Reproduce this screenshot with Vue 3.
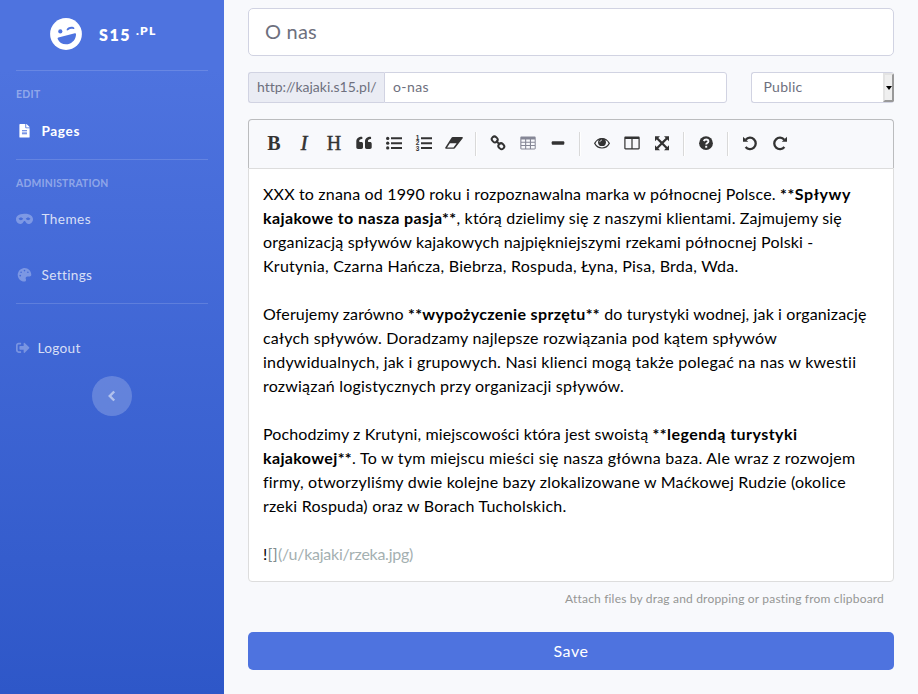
<script setup>
// Spreads a run of text over a given width by adjusting its letter spacing.
const vFit = {
  mounted(el, { value }) {
    const natural = el.getBoundingClientRect().width
    const count = el.textContent.length
    el.style.letterSpacing = `${(value - natural) / count}px`
  },
}

// Each line is a list of runs: [text, width, kind]
const lines = [
  [['XXX to znana od 1990 roku i rozpoznawalna marka w północnej Polsce. ', 517], ['**Spływy', 71, 'bold']],
  [['kajakowe to nasza pasja**', 193.5, 'bold'], [', którą dzielimy się z naszymi klientami. Zajmujemy się', 385.5]],
  [['organizacją spływów kajakowych najpiękniejszymi rzekami północnej Polski -', 550.5]],
  [['Krutynia, Czarna Hańcza, Biebrza, Rospuda, Łyna, Pisa, Brda, Wda.', 475.5]],
  [],
  [['Oferujemy zarówno ', 145], ['**wypożyczenie sprzętu**', 192, 'bold'], [' do turystyki wodnej, jak i organizację', 266.5]],
  [['całych spływów. Doradzamy najlepsze rozwiązania pod kątem spływów', 514]],
  [['indywidualnych, jak i grupowych. Nasi klienci mogą także polegać na nas w kwestii', 593.5]],
  [['rozwiązań logistycznych przy organizacji spływów.', 361]],
  [],
  [['Pochodzimy z Krutyni, miejscowości która jest swoistą ', 389.5], ['**legendą turystyki', 145, 'bold']],
  [['kajakowej**', 89, 'bold'], ['. To w tym miejscu mieści się nasza główna baza. Ale wraz z rozwojem', 503.5]],
  [['firmy, otworzyliśmy dwie kolejne bazy zlokalizowane w Maćkowej Rudzie (okolice', 582.5]],
  [['rzeki Rospuda) oraz w Borach Tucholskich.', 303.5]],
  [],
  [['!', 4.5], ['[]', 10.5, 'bracket'], ['(/u/kajaki/rzeka.jpg)', 135, 'url']],
]
</script>

<template>
  <div class="page">
    <aside class="sidebar">
      <div class="brand">
        <svg class="logo" viewBox="0 0 32 32">
          <circle cx="16" cy="16" r="15.900" fill="#fff" />
          <g fill="#4e73df">
            <circle cx="10.300" cy="13.400" r="2.100" />
            <path d="M8.400 19.600 24.900 15.200c.6-.1 1.100.2 1.100.9.200 5-3.400 9.300-8.200 10.100-4.600.7-8.500-1.300-10.100-5.300-.2-.6.100-1.100.7-1.300Z" />
            <path d="M16.600 11.800c.4-2.700 5.800-4.100 7.600-2 .6.800-.2 1.500-1 1.200-1.800-.6-3.400-.2-4.800 1-.7.7-2 .7-1.800-.2Z" />
          </g>
        </svg>
        <div class="brand-text"><span v-fit="32">S15</span><sup v-fit="20.500">.PL</sup></div>
      </div>
      <div class="rule"></div>
      <div class="heading edit"><span v-fit="24.500">EDIT</span></div>
      <div class="link active pages">
        <svg class="fw" viewBox="-120 0 624 512"><path d="M224 136V0H24C10.700 0 0 10.700 0 24v464c0 13.300 10.700 24 24 24h336c13.300 0 24-10.700 24-24V160H248c-13.200 0-24-10.800-24-24zm64 236c0 6.600-5.400 12-12 12H108c-6.600 0-12-5.400-12-12v-8c0-6.600 5.400-12 12-12h168c6.600 0 12 5.400 12 12v8zm0-64c0 6.600-5.400 12-12 12H108c-6.600 0-12-5.400-12-12v-8c0-6.600 5.400-12 12-12h168c6.600 0 12 5.400 12 12v8zm0-72v8c0 6.600-5.400 12-12 12H108c-6.600 0-12-5.400-12-12v-8c0-6.600 5.400-12 12-12h168c6.600 0 12 5.400 12 12zm96-114.100v6.100H256V0h6.100c6.400 0 12.500 2.500 17 7l97.900 98c4.500 4.500 7 10.600 7 16.900z" /></svg>
        <span v-fit="38.500">Pages</span>
      </div>
      <div class="rule"></div>
      <div class="heading admin"><span v-fit="92.500">ADMINISTRATION</span></div>
      <div class="link themes">
        <svg class="fw" viewBox="0 0 640 512"><path d="M320.670 64c-442.600 0-357.570 384-158.460 384 39.900 0 77.470-20.690 101.420-55.860l25.730-37.790c15.660-22.990 46.970-22.990 62.630 0l25.730 37.790C401.660 427.310 439.230 448 479.130 448c189.860 0 290.630-384-158.460-384zM184 308.360c-41.060 0-67.760-25.660-80.080-41.050-5.230-6.530-5.230-16.090 0-22.630 12.320-15.400 39.010-41.050 80.080-41.050s67.760 25.660 80.080 41.050c5.230 6.530 5.230 16.090 0 22.630-12.320 15.400-39.020 41.050-80.080 41.050zm272 0c-41.060 0-67.760-25.660-80.080-41.050-5.230-6.530-5.230-16.090 0-22.630 12.320-15.400 39.010-41.050 80.080-41.050s67.760 25.660 80.080 41.050c5.230 6.530 5.230 16.090 0 22.630-12.320 15.400-39.020 41.050-80.080 41.050z" /></svg>
        <span v-fit="49.500">Themes</span>
      </div>
      <div class="link settings">
        <svg class="fw" viewBox="-64 0 640 512"><path d="M204.300 5C104.900 24.400 24.800 104.300 5.200 203.400c-37 187 131.700 326.400 258.800 306.700 41.200-6.400 61.400-54.600 42.500-91.700-23.100-45.400 9.900-98.400 60.900-98.400h79.700c35.800 0 64.800-29.600 64.900-65.300C511.500 97.100 368.100-26.900 204.300 5zM96 320c-17.700 0-32-14.300-32-32s14.300-32 32-32 32 14.300 32 32-14.300 32-32 32zm32-128c-17.700 0-32-14.300-32-32s14.300-32 32-32 32 14.300 32 32-14.300 32-32 32zm128-64c-17.700 0-32-14.300-32-32s14.300-32 32-32 32 14.300 32 32-14.300 32-32 32zm128 64c-17.700 0-32-14.300-32-32s14.300-32 32-32 32 14.300 32 32-14.300 32-32 32z" /></svg>
        <span v-fit="50.500">Settings</span>
      </div>
      <div class="rule"></div>
      <div class="link logout">
        <svg class="exit" viewBox="0 0 512 512"><path d="M497 273L329 441c-15 15-41 4.500-41-17v-96H152c-13.300 0-24-10.700-24-24v-96c0-13.300 10.700-24 24-24h136V88c0-21.400 25.900-32 41-17l168 168c9.300 9.400 9.300 24.600 0 34zM192 436v-40c0-6.600-5.400-12-12-12H96c-17.700 0-32-14.300-32-32V160c0-17.700 14.300-32 32-32h84c6.600 0 12-5.400 12-12V76c0-6.600-5.400-12-12-12H96c-53 0-96 43-96 96v192c0 53 43 96 96 96h84c6.600 0 12-5.400 12-12z" /></svg>
        <span v-fit="43">Logout</span>
      </div>
      <button class="collapse">
        <svg width="10" height="12" viewBox="0 0 10 12"><path d="M7.200 1.500 2.800 6l4.400 4.500" fill="none" stroke="currentColor" stroke-width="2.500" /></svg>
      </button>
    </aside>

    <main class="content">
      <div class="title-field"><span v-fit="52">O nas</span></div>
      <div class="row">
        <div class="slug">
          <div class="prefix"><span v-fit="119">http://kajaki.s15.pl/</span></div>
          <div class="slug-input"><span v-fit="36">o-nas</span></div>
        </div>
        <div class="select">
          <span v-fit="39">Public</span>
          <div class="arrow"><svg width="6" height="4" viewBox="0 0 6 4"><path d="M0 0h6L3 4z" fill="#000" /></svg></div>
        </div>
      </div>

      <div class="toolbar">
        <div class="tool letter">B</div>
        <div class="tool letter italic">I</div>
        <div class="tool letter plain">H</div>
        <div class="tool">
          <svg viewBox="0 0 16 16"><path d="M7 8.700v3.600C7 13.300 6.300 14 5.300 14H2C1 14 .3 13.300.3 12.300V6.500C.3 3.700 2.500 1.800 5.800 1.800c.4 0 .6.300.6.600v1.100c0 .4-.3.600-.6.600C4 4.200 3.200 5 3.200 6.300c0 .5.300.7.800.7h1.300C6.300 7 7 7.700 7 8.700ZM15.700 8.700v3.600c0 1-.7 1.700-1.700 1.700h-3.300c-1 0-1.700-.7-1.700-1.700V6.500c0-2.800 2.200-4.700 5.500-4.700.4 0 .6.300.6.600v1.100c0 .4-.3.600-.6.600-1.800.1-2.600.9-2.600 2.200 0 .5.300.7.800.7H14c1 0 1.700.7 1.700 1.700Z" /></svg>
        </div>
        <div class="tool">
          <svg viewBox="0 0 16 16"><circle cx="1.700" cy="3.400" r="1.650" /><circle cx="1.700" cy="8.200" r="1.650" /><circle cx="1.700" cy="12.900" r="1.650" /><path d="M5 2.300h11v2H5zM5 7.200h11v2H5zM5 12h11v2H5z" /></svg>
        </div>
        <div class="tool">
          <svg class="list" viewBox="0 0 16 16"><path d="M5 2.300h11v2H5zM5 7.200h11v2H5zM5 12h11v2H5z" /><g class="digits"><text x="-.3" y="4.800">1</text><text x="-.3" y="10.400">2</text><text x="-.3" y="16">3</text></g></svg>
        </div>
        <div class="tool">
          <svg class="wide" viewBox="0 0 18 16"><path fill-rule="evenodd" d="M7.700 2h9.400c.7 0 1 .7.600 1.200l-7.600 9.900c-.3.500-.7.700-1.200.7H1C.3 13.800-.1 13.100.3 12.600L6.500 2.700C6.800 2.200 7.200 2 7.700 2ZM4.900 8.200 2.100 12.500h6.400l3.100-4.300Z" /></svg>
        </div>
        <i class="sep"></i>
        <div class="tool">
          <svg viewBox="0 0 16 16"><g fill="none" stroke="#333" stroke-width="2"><rect x="-3" y="-2.600" width="6" height="5.200" rx="2.500" transform="translate(4.700 4.400) rotate(45)" /><rect x="-3" y="-2.600" width="6" height="5.200" rx="2.500" transform="translate(11.300 11.200) rotate(45)" /><path d="m6 5.700 4 4" /></g></svg>
        </div>
        <div class="tool muted">
          <svg viewBox="0 0 16 16"><path fill-rule="evenodd" d="M1.500 1.500h13c.7 0 1.200.5 1.200 1.200v10.600c0 .7-.5 1.200-1.200 1.200h-13c-.7 0-1.200-.5-1.200-1.200V2.700c0-.7.5-1.200 1.200-1.200ZM1.400 4.500v2.200h3.700V4.500Zm4.800 0v2.200h3.700V4.500Zm4.800 0v2.200h3.700V4.500ZM1.400 7.800V10h3.700V7.800Zm4.800 0V10h3.700V7.800Zm4.800 0V10h3.700V7.800ZM1.400 11.100v2.300h3.700v-2.300Zm4.800 0v2.300h3.700v-2.300Zm4.800 0v2.300h3.700v-2.300Z" /></svg>
        </div>
        <div class="tool"><svg viewBox="0 0 16 16"><rect x="1.700" y="6.200" width="12.600" height="3.500" rx="1" /></svg></div>
        <i class="sep"></i>
        <div class="tool">
          <svg viewBox="0 0 16 16"><path d="M.7 8.400C2.300 5.400 5 3.500 8 3.500s5.700 1.900 7.300 4.900C13.700 11.300 11 13 8 13S2.300 11.300.7 8.400Z" fill="none" stroke="#333" stroke-width="1.200" /><circle cx="8" cy="7.200" r="3.900" /><path d="M5.900 7.200C5.900 6 6.800 5.100 8 5.100" fill="none" stroke="#f8f9fc" stroke-width=".8" /></svg>
        </div>
        <div class="tool">
          <svg viewBox="0 0 16 16"><path fill-rule="evenodd" d="M1.500 1.500h13c.7 0 1.200.5 1.200 1.200v10.600c0 .7-.5 1.200-1.200 1.200h-13c-.7 0-1.200-.5-1.200-1.200V2.700c0-.7.5-1.200 1.200-1.200ZM1.500 3.900v9.400h5.900V3.900Zm7.100 0v9.400h5.900V3.900Z" /></svg>
        </div>
        <div class="tool">
          <svg viewBox="0 0 16 16"><path d="M1 1.200h5L4.300 2.900 8 6.600l3.700-3.700L10 1.200h5v5l-1.700-1.700L9.600 8.200l3.700 3.700L15 10.200v5h-5l1.700-1.700L8 9.800l-3.700 3.700L6 15.200H1v-5l1.700 1.700 3.700-3.700-3.700-3.700L1 6.200Z" /></svg>
        </div>
        <i class="sep"></i>
        <div class="tool">
          <svg viewBox="0 0 16 16"><circle cx="8" cy="8.200" r="6.900" /><path d="M5.800 6.100C6.200 4.900 7 4.500 8.100 4.500c1.300 0 2.300.8 2.300 1.900 0 1.700-2.200 1.600-2.200 3.100" fill="none" stroke="#f8f9fc" stroke-width="1.900" /><path d="M7.200 10.800h2v1.900h-2z" fill="#f8f9fc" /></svg>
        </div>
        <i class="sep"></i>
        <div class="tool">
          <svg viewBox="0 0 16 16"><path d="M3.700 4.700A5.700 5.700 0 1 1 3.600 12" fill="none" stroke="#333" stroke-width="2.300" /><path d="M1 1.700v5.100h5.200Z" /></svg>
        </div>
        <div class="tool">
          <svg viewBox="0 0 16 16"><path d="M12.300 4.700A5.700 5.700 0 1 0 12.400 12" fill="none" stroke="#333" stroke-width="2.300" /><path d="M15 1.700v5.100H9.800Z" /></svg>
        </div>
      </div>

      <div class="editor">
        <div v-for="(line, i) in lines" :key="i" class="line">
          <span v-for="(run, j) in line" :key="j" v-fit="run[1]" :class="run[2]">{{ run[0] }}</span>
        </div>
      </div>
      <div class="hint"><span v-fit="318.500">Attach files by drag and dropping or pasting from clipboard</span></div>
      <button class="save"><span v-fit="35">Save</span></button>
    </main>
  </div>
</template>

<style>
body {
  margin: 0;
  background: #f8f9fc;
}
</style>

<style scoped>
.page {
  display: flex;
  width: 918px;
  height: 694px;
  overflow: hidden;
  background: #f8f9fc;
  font-family: Lato, "Noto Sans", sans-serif;
  color: #6e707e;
}
.page *, .page {
  box-sizing: border-box;
}
span {
  white-space: pre;
}
svg {
  display: block;
  flex: none;
}

.sidebar {
  width: 224px;
  flex: none;
  display: flex;
  flex-direction: column;
  background: linear-gradient(180deg, #4e73df 10%, #2e57c8 100%);
  color: #fff;
}
.brand {
  height: 70px;
  flex: none;
  display: flex;
  align-items: center;
  padding: 0 0 2px 50px;
}
.logo {
  width: 32px;
  height: 32px;
}
.brand-text {
  display: flex;
  margin-left: 17px;
  padding-top: 1px;
  font-size: 16px;
  line-height: 24px;
  font-weight: 800;
}
.brand-text sup {
  margin-left: 5px;
  font-size: 12px;
  line-height: 15px;
}
.rule {
  height: 1px;
  flex: none;
  margin: 0 16px;
  background: rgba(255, 255, 255, 0.15);
}
.heading {
  padding: 0 16px;
  height: 16px;
  font-size: 10.400px;
  line-height: 17px;
  font-weight: 700;
  color: rgba(255, 255, 255, 0.4);
}
.edit {
  margin-top: 15px;
}
.admin {
  margin-top: 15px;
}
.link {
  display: flex;
  align-items: center;
  height: 20px;
  flex: none;
  padding: 0 16px;
  font-size: 13.600px;
  line-height: 20px;
  color: rgba(255, 255, 255, 0.8);
}
.link svg {
  fill: rgba(255, 255, 255, 0.3);
}
.link.active {
  font-weight: 700;
  color: #fff;
}
.link.active svg {
  fill: #fff;
}
.fw {
  width: 17px;
  height: 13.600px;
  margin-right: 8.500px;
}
.exit {
  width: 13.600px;
  height: 13.600px;
  margin-right: 8px;
}
.pages {
  margin: 19px 0 18px;
}
.themes {
  margin: 18px 0 36px;
}
.settings {
  margin-bottom: 18px;
}
.logout {
  margin: 34px 0 18px;
}
.collapse {
  align-self: center;
  display: flex;
  align-items: center;
  justify-content: center;
  width: 40px;
  height: 40px;
  padding: 0;
  border: 0;
  border-radius: 50%;
  background: rgba(255, 255, 255, 0.2);
  color: rgba(255, 255, 255, 0.5);
}

.content {
  flex: 1;
  display: flex;
  flex-direction: column;
  padding: 8px 24px 0;
}
.title-field {
  display: flex;
  align-items: center;
  height: 48px;
  padding: 0 16px 2px;
  border: 1px solid #d1d3e2;
  border-radius: 5px;
  background: #fff;
  font-size: 20px;
}
.row {
  display: flex;
  gap: 24px;
  height: 31px;
  margin: 16px 0;
  font-size: 14px;
}
.slug {
  display: flex;
  width: 479px;
}
.prefix {
  display: flex;
  align-items: center;
  width: 136px;
  padding: 0 0 2px 8px;
  border: 1px solid #d1d3e2;
  border-right: 0;
  border-radius: 3px 0 0 3px;
  background: #eaecf4;
}
.slug-input {
  flex: 1;
  display: flex;
  align-items: center;
  padding: 0 0 2px 8px;
  border: 1px solid #d1d3e2;
  border-radius: 0 3px 3px 0;
  background: #fff;
}
.select {
  flex: 1;
  display: flex;
  align-items: center;
  justify-content: space-between;
  padding-left: 11.500px;
  overflow: hidden;
  border: 1px solid #d1d3e2;
  border-right: 0;
  border-radius: 3px;
  background: #fff;
}
.select span {
  padding-bottom: 2px;
}
.arrow {
  display: flex;
  align-items: center;
  justify-content: center;
  width: 11px;
  height: 29px;
  border: 2px solid #e3e3e3;
  border-right: 2px solid #999;
  border-bottom: 2px solid #999;
  background: #efefef;
}
.toolbar {
  display: flex;
  align-items: center;
  height: 49px;
  flex: none;
  padding: 0 10px 1px;
  border: 1px solid #bbbcbe;
  border-bottom: 0;
  border-radius: 4px 4px 0 0;
}
.tool {
  display: flex;
  align-items: center;
  justify-content: center;
  width: 30px;
  height: 30px;
  padding-bottom: 1px;
  color: #333;
}
.tool svg {
  width: 16px;
  height: 16px;
  fill: #333;
}
.tool svg.list {
  overflow: visible;
}
.tool svg.wide {
  width: 18px;
}
.tool.muted svg {
  fill: #858796;
}
.letter {
  font: bold 20px/28px "Liberation Serif", serif;
}
.italic {
  font-weight: 400;
  font-style: italic;
  -webkit-text-stroke: 0.600px #333;
}
.plain {
  font-weight: 400;
  -webkit-text-stroke: 0.400px #333;
}
.digits {
  font: bold 6.500px "Liberation Sans", sans-serif;
}
.sep {
  width: 2px;
  height: 24px;
  margin: 0 6px;
  border-left: 1px solid #d9d9d9;
  border-right: 1px solid #fff;
}
.editor {
  height: 414px;
  flex: none;
  padding: 13px 14px;
  border: 1px solid #ddd;
  border-radius: 0 0 4px 4px;
  background: #fff;
  color: #000;
  font-size: 16px;
}
.line {
  display: flex;
  height: 24px;
  line-height: 24px;
}
.bold {
  font-weight: 700;
}
.bracket {
  color: #7f8c8d;
}
.url {
  color: #a4b0b1;
}
.hint {
  display: flex;
  justify-content: flex-end;
  margin-top: 8px;
  padding-right: 10px;
  font-size: 12px;
  line-height: 18px;
  color: #959694;
}
.save {
  display: flex;
  align-items: center;
  justify-content: center;
  height: 38px;
  margin-top: 24px;
  padding: 0 0 2px;
  border: 0;
  border-radius: 5px;
  background: #4e73df;
  color: #fff;
  font: 16px Lato, "Noto Sans", sans-serif;
}
</style>
